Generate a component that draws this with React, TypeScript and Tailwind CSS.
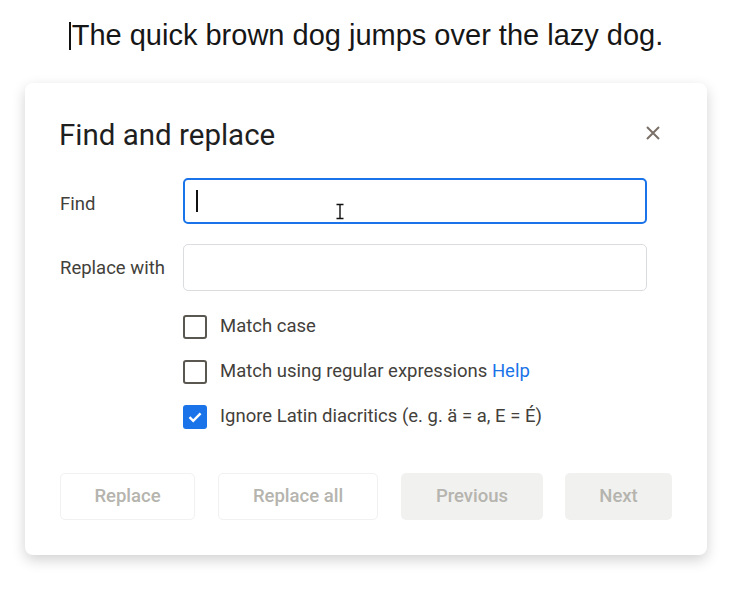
import React from 'react'

const body = { fontFamily: 'Roboto, "Noto Sans", sans-serif' }

const Checkbox = ({ checked }: { checked?: boolean }) =>
  checked ? (
    <div className='w-[24px] h-[24px] rounded-[3px] bg-[#1a73e8] flex items-center justify-center'>
      <svg width='18' height='18' viewBox='0 0 18 18'>
        <path d='M3.5 9.2 L7.2 12.8 L14.6 5.4' fill='none' stroke='white' strokeWidth='2.4' />
      </svg>
    </div>
  ) : (
    <div className='w-[24px] h-[24px] rounded-[3px] border-2 border-[#5a5650]' />
  )

export default function App() {
  return (
    <div className='min-h-[590px] bg-white' style={body}>
      {/* document line */}
      <div className='flex justify-center pt-[19px]'>
        <div className='flex items-start'>
          <span className='mt-[3px] w-[2px] h-[28px] bg-[#111]' />
          <span className='text-[29px] leading-[32px] text-[#161616] ml-[1px]' style={{ fontFamily: '"Liberation Sans", Arial, sans-serif' }}>
            The quick brown dog jumps over the lazy dog.
          </span>
        </div>
      </div>

      {/* dialog */}
      <div className='mx-auto mt-[32px] w-[682px] rounded-[8px] bg-white shadow-[0_5px_14px_rgba(0,0,0,0.18)] px-[34px] pt-[34px] pb-[35px]'>
        <div className='flex justify-between items-start h-[36px]'>
          <h1 className='text-[29.5px] leading-[36px] text-[#1f1f1f]'>Find and replace</h1>
          <svg className='mt-[9px] mr-[13px]' width='14' height='14' viewBox='0 0 14 14'>
            <path d='M1 1 L13 13 M13 1 L1 13' stroke='#7a7068' strokeWidth='2' />
          </svg>
        </div>

        <div className='flex items-center mt-[25px]'>
          <label className='w-[124px] pt-[8px] text-[18.5px] text-[#433f3b] pl-[1px]'>Find</label>
          <div className='relative w-[464px] h-[46px] rounded-[5px] border-2 border-[#1a73e8] flex items-center pl-[11px]'>
            <span className='w-[2px] h-[22px] bg-[#111]' />
            {/* mouse pointer */}
            <svg className='absolute left-[150px] top-[23px]' width='10' height='17' viewBox='0 0 10 17'>
              <path d='M1 1.5 H9 M5 1.5 V15.5 M1 15.5 H9' stroke='white' strokeWidth='3.5' fill='none' />
              <path d='M1.5 1.5 H8.5 M5 1.5 V15.5 M1.5 15.5 H8.5' stroke='#111' strokeWidth='1.4' fill='none' />
            </svg>
          </div>
        </div>

        <div className='flex items-center mt-[20px]'>
          <label className='w-[124px] pt-[2px] text-[18.5px] text-[#433f3b] pl-[1px]'>Replace with</label>
          <div className='w-[464px] h-[47px] rounded-[5px] border border-[#dadce0]' />
        </div>

        <div className='mt-[13px] ml-[124px] flex flex-col text-[18.5px] text-[#433f3b]'>
          <div className='h-[45px] flex items-center gap-[13px]'>
            <Checkbox />
            <span>Match case</span>
          </div>
          <div className='h-[45px] flex items-center gap-[13px]'>
            <Checkbox />
            <span>
              Match using regular expressions <span className='text-[#1a73e8]'>Help</span>
            </span>
          </div>
          <div className='h-[45px] flex items-center gap-[13px]'>
            <Checkbox checked />
            <span>Ignore Latin diacritics (e. g. ä = a, E = É)</span>
          </div>
        </div>

        <div className='mt-[34px] ml-[1px] flex text-[18.5px] font-medium text-[#b5b4ae]'>
          <button className='w-[135px] h-[47px] rounded-[5px] border border-[#f1f1f1]'>Replace</button>
          <button className='ml-[23px] w-[160px] h-[47px] rounded-[5px] border border-[#f1f1f1]'>Replace all</button>
          <button className='ml-[23px] w-[142px] h-[47px] rounded-[5px] bg-[#f1f1f0]'>Previous</button>
          <button className='ml-[22px] w-[107px] h-[47px] rounded-[5px] bg-[#f1f1f0]'>Next</button>
        </div>
      </div>
    </div>
  )
}
